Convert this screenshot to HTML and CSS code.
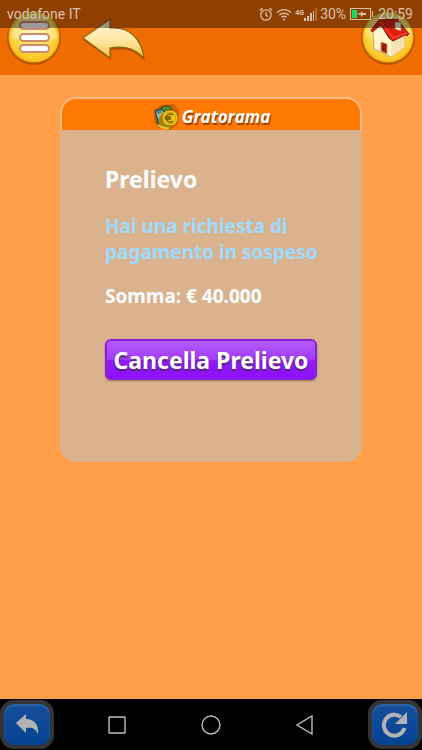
FILE: index.html
```html
<!DOCTYPE html>
<html lang="it">
<head>
<meta charset="utf-8">
<meta name="viewport" content="width=device-width, initial-scale=1">
<title>Gratorama - Prelievo</title>
<link rel="stylesheet" href="styles.css">
</head>
<body>
<header class="topbar">
  <div class="topbar-left">
    <button class="icon-button" type="button" aria-label="Menu">
      <svg width="58" height="58" viewBox="0 0 58 58">
        <defs>
          <radialGradient id="gold" cx="50%" cy="40%" r="60%">
            <stop offset="0" stop-color="#fff0a0"/><stop offset=".6" stop-color="#fcdc50"/><stop offset="1" stop-color="#fbc21c"/>
          </radialGradient>
          <linearGradient id="cream" x1="0" y1="0" x2="0" y2="1">
            <stop offset="0" stop-color="#fff6dc"/><stop offset=".5" stop-color="#ffe9a8"/><stop offset="1" stop-color="#f7c440"/>
          </linearGradient>
        </defs>
        <circle cx="29" cy="30" r="27" fill="#a84a00" opacity=".75"/>
        <circle cx="29" cy="29" r="26" fill="#f9b717" stroke="#b45c00"/>
        <circle cx="29" cy="29" r="24" fill="url(#gold)"/>
        <path d="M6 30a23 23 0 0 1 46 0q-22 8-46 0z" fill="#fff" opacity=".3"/>
        <g fill="#fff" stroke="#cf8b6c" stroke-width="2">
          <rect x="15" y="14" width="29" height="7" rx="3.500"/>
          <rect x="15" y="26" width="29" height="7" rx="3.500"/>
          <rect x="15" y="37" width="29" height="7" rx="3.500"/>
        </g>
      </svg>
    </button>
    <button class="icon-button" type="button" aria-label="Indietro">
      <svg width="68" height="58" viewBox="0 0 68 58">
        <path d="M4 32 31 13V23C48 21 61 31 66 53 55 41 44 40 32 42V52Z" fill="#8c3c00" opacity=".6"/>
        <path d="M4 30 31 11V20C50 18 63 31 65 51 56 39 43 38 31 40V50Z" fill="url(#cream)" stroke="#8f6412" stroke-width="1.2" stroke-linejoin="round"/>
      </svg>
    </button>
  </div>
  <button class="icon-button" type="button" aria-label="Home">
    <svg width="58" height="58" viewBox="0 0 58 58">
      <circle cx="29" cy="30" r="27" fill="#a84a00" opacity=".75"/>
      <circle cx="29" cy="29" r="26" fill="#f9b717" stroke="#b45c00"/>
      <circle cx="29" cy="29" r="24" fill="url(#gold)"/>
      <path d="M6 28a23 23 0 0 1 46 0q-22 8-46 0z" fill="#fff" opacity=".25"/>
      <path d="M14 24 21 14 32 30 45 26 46 39 32 49 15 41Z" fill="#fff4cf" stroke="#c29455" stroke-width=".8"/>
      <path d="M32 31 45 26 46 39 32 49Z" fill="#f8e3b4"/>
      <path d="M20 12 38 11 50 26 48 28 46 27 34 33 30 30 22 17 13 24 12 22Z" fill="#dd200e" stroke="#8f1505" stroke-width="1"/>
      <path d="M21 13 34 30 48 25" fill="none" stroke="#f0452c" stroke-width="1.5"/>
      <path d="M36 14h6v9l-6-2z" fill="#fff0cf" stroke="#a98048" stroke-width=".8"/>
      <path d="M22 34l6 2v10l-6-3z" fill="#941d10" stroke="#d09a55"/>
    </svg>
  </button>
</header>

<div class="status">
  <span>vodafone IT</span>
  <div class="status-right">
    <svg width="14" height="15" viewBox="0 0 14 15" fill="none" stroke="currentColor" stroke-width="1.3">
      <circle cx="7" cy="8" r="5.2"/><path d="M7 5v3.3l2.3 1.2M.8 3.5 3.6 1M13.2 3.5 10.4 1"/>
    </svg>
    <svg width="16" height="13" viewBox="0 0 16 13" fill="none" stroke="currentColor" stroke-width="1.4">
      <path d="M1 4.5a10 10 0 0 1 14 0M3.3 7a6.800 6.800 0 0 1 9.400 0M5.600 9.300a3.500 3.500 0 0 1 4.800 0"/><circle cx="8" cy="11.500" r="1" fill="currentColor" stroke="none"/>
    </svg>
    <span class="signal">
      <small>4G</small>
      <svg width="13" height="13" viewBox="0 0 13 13" fill="currentColor">
        <path d="M0 10h2v3H0zM3 8h2v5H3zM6 5h2v8H6zM9 3h1v10H9z"/><path d="M11 0h2v13h-2z" opacity=".35"/>
      </svg>
    </span>
    <span>30%</span>
    <svg class="battery" width="24" height="12" viewBox="0 0 24 12">
      <rect x=".5" y=".5" width="20" height="11" fill="none" stroke="currentColor"/>
      <path d="M2 2h5v8H2z" fill="#10dd62"/>
      <path d="M6 6 11 5V3l2 2h3v2h-3l-2 2V7z" fill="currentColor"/>
      <path d="M22 3h1v6h-1z" fill="currentColor"/>
    </svg>
    <span>20:59</span>
  </div>
</div>

<main>
  <section class="card">
    <div class="brand">
      <svg width="28" height="28" viewBox="0 0 28 28">
        <path d="M2 7 9 2 22 1 27 8 26 21 18 27 7 25 2 19Z" fill="#a34a08" opacity=".55"/>
        <path d="M3 8 14 4 16 22 7 24Z" fill="#4c8792" stroke="#24373a"/>
        <path d="M7 11 12 9 13 21 9 22Z" fill="#d6cb68"/>
        <path d="M9 5q6-5 11 1l-8 3z" fill="#508d2c" stroke="#263617"/>
        <path d="M5 10l4 10M10 8l3 6" stroke="#c4dedb"/>
        <ellipse cx="15" cy="17" rx="8" ry="8" fill="#a98000"/>
        <circle cx="18" cy="15" r="8" fill="#f6d520" stroke="#977000"/>
        <circle cx="18" cy="15" r="6" fill="#f2c80e" stroke="#c69a05"/>
        <path d="M21 12a4 4 0 1 0 0 6M13 14h6M13 16h6" fill="none" stroke="#725000" stroke-width="1.5"/>
        <path d="M6 22q5 4 11 3" fill="none" stroke="#ecc725" stroke-width="2"/>
      </svg>
      <span class="brand-name">Gratorama</span>
    </div>
    <div class="card-body">
      <h1>Prelievo</h1>
      <p class="notice">Hai una richiesta di pagamento in sospeso</p>
      <p class="amount">Somma: € 40.000</p>
      <button class="cancel" type="button">Cancella Prelievo</button>
    </div>
  </section>
</main>

<nav class="bottom">
  <button class="tile" type="button" aria-label="Pagina precedente">
    <svg width="26" height="24" viewBox="0 0 26 24"><path d="M2 10 12 1v5c9 0 13 7 12 15-3-6-6-7-12-6v5Z" fill="#b3b3b3"/></svg>
  </button>
  <div class="system">
    <button type="button" aria-label="Recenti"><svg width="20" height="20" viewBox="0 0 20 20"><rect x="2" y="2" width="16" height="16" rx=".5"/></svg></button>
    <button type="button" aria-label="Schermata iniziale"><svg width="20" height="20" viewBox="0 0 20 20"><circle cx="10" cy="10" r="9"/></svg></button>
    <button type="button" aria-label="Indietro"><svg width="20" height="20" viewBox="0 0 20 20"><path d="M17 1v18L2 10Z"/></svg></button>
  </div>
  <button class="tile" type="button" aria-label="Aggiorna">
    <svg width="28" height="28" viewBox="0 0 28 28"><path d="M20 6A10.500 10.500 0 1 0 23.500 17" fill="none" stroke="#b3b3b3" stroke-width="4"/><path d="M26 1v12H14Z" fill="#b3b3b3"/></svg>
  </button>
</nav>
</body>
</html>
```

FILE: styles.css
```css
* {
  box-sizing: border-box;
}

body {
  position: relative;
  display: flex;
  flex-direction: column;
  min-height: 100vh;
  margin: 0;
  background: #ff9f4a;
  color: #fff;
  font-family: "Noto Sans", sans-serif;
}

button {
  padding: 0;
  border: 0;
  background: none;
  color: inherit;
  font: inherit;
  cursor: pointer;
}

svg {
  display: block;
  flex: none;
}

.topbar {
  display: flex;
  justify-content: space-between;
  padding: 8px 5px 9px;
  background: #ef6c00;
}

.topbar-left {
  display: flex;
  gap: 16px;
}

.status {
  position: absolute;
  top: 0;
  left: 0;
  right: 0;
  display: flex;
  align-items: center;
  justify-content: space-between;
  height: 28px;
  padding: 0 9px 0 7px;
  background: rgba(0, 0, 0, 0.4);
  color: #d9c0ac;
  font: 14px/28px Roboto, sans-serif;
  pointer-events: none;
}

.status-right {
  display: flex;
  align-items: center;
  gap: 3px;
}

.signal {
  display: flex;
  align-items: center;
}

.signal small {
  align-self: flex-start;
  font: bold 7px/10px Roboto, sans-serif;
}

.battery {
  margin: 0 1px;
}

main {
  flex: 1;
  padding: 22px 60px;
}

.card {
  min-height: 365px;
  border-radius: 16px;
  background: #dbb28e;
  overflow: hidden;
}

.brand {
  display: flex;
  align-items: center;
  justify-content: center;
  gap: 2px;
  height: 33px;
  padding-top: 4px;
  border: 2px solid #ffbd83;
  border-bottom: 0;
  border-radius: 16px 16px 0 0;
  background: #ff7800;
}

.brand-name {
  font: italic bold 17px/24px "Open Sans", sans-serif;
  text-shadow: 1px 2px 1px #8b3d00;
}

.card-body {
  padding: 31px 45px;
}

h1 {
  margin: 0 0 16px;
  font-size: 23px;
  line-height: 36px;
}

p {
  margin: 0 -8px 18px 0;
  font-size: 19px;
  font-weight: bold;
  line-height: 26px;
}

.notice {
  color: #9edcff;
}

.amount {
  margin-bottom: 30px;
}

.cancel {
  width: 100%;
  height: 41px;
  border: 2px solid #8620dc;
  border-radius: 6px;
  background: linear-gradient(#b45cfa, #a23bf7 50%, #941cfb 51%, #8e10fb);
  box-shadow: 0 1px 2px #8d7457;
  font-size: 23px;
  font-weight: bold;
  line-height: 36px;
  text-shadow: 0 2px 2px #4d2866;
  white-space: nowrap;
}

.bottom {
  display: grid;
  grid-template-columns: 54px 1fr 54px;
  align-items: center;
  height: 51px;
  background: #000;
}

.tile {
  display: grid;
  place-items: center;
  height: 49px;
  border: 4px solid #343434;
  border-radius: 14px;
  background: linear-gradient(#18509b, #034293);
  box-shadow: inset 0 2px 2px #2e67a9;
}

.system {
  display: grid;
  grid-template-columns: repeat(3, 1fr);
  justify-items: center;
  padding: 0 16px;
}

.system svg {
  fill: none;
  stroke: #bdbdbd;
  stroke-width: 1.4;
}
```
